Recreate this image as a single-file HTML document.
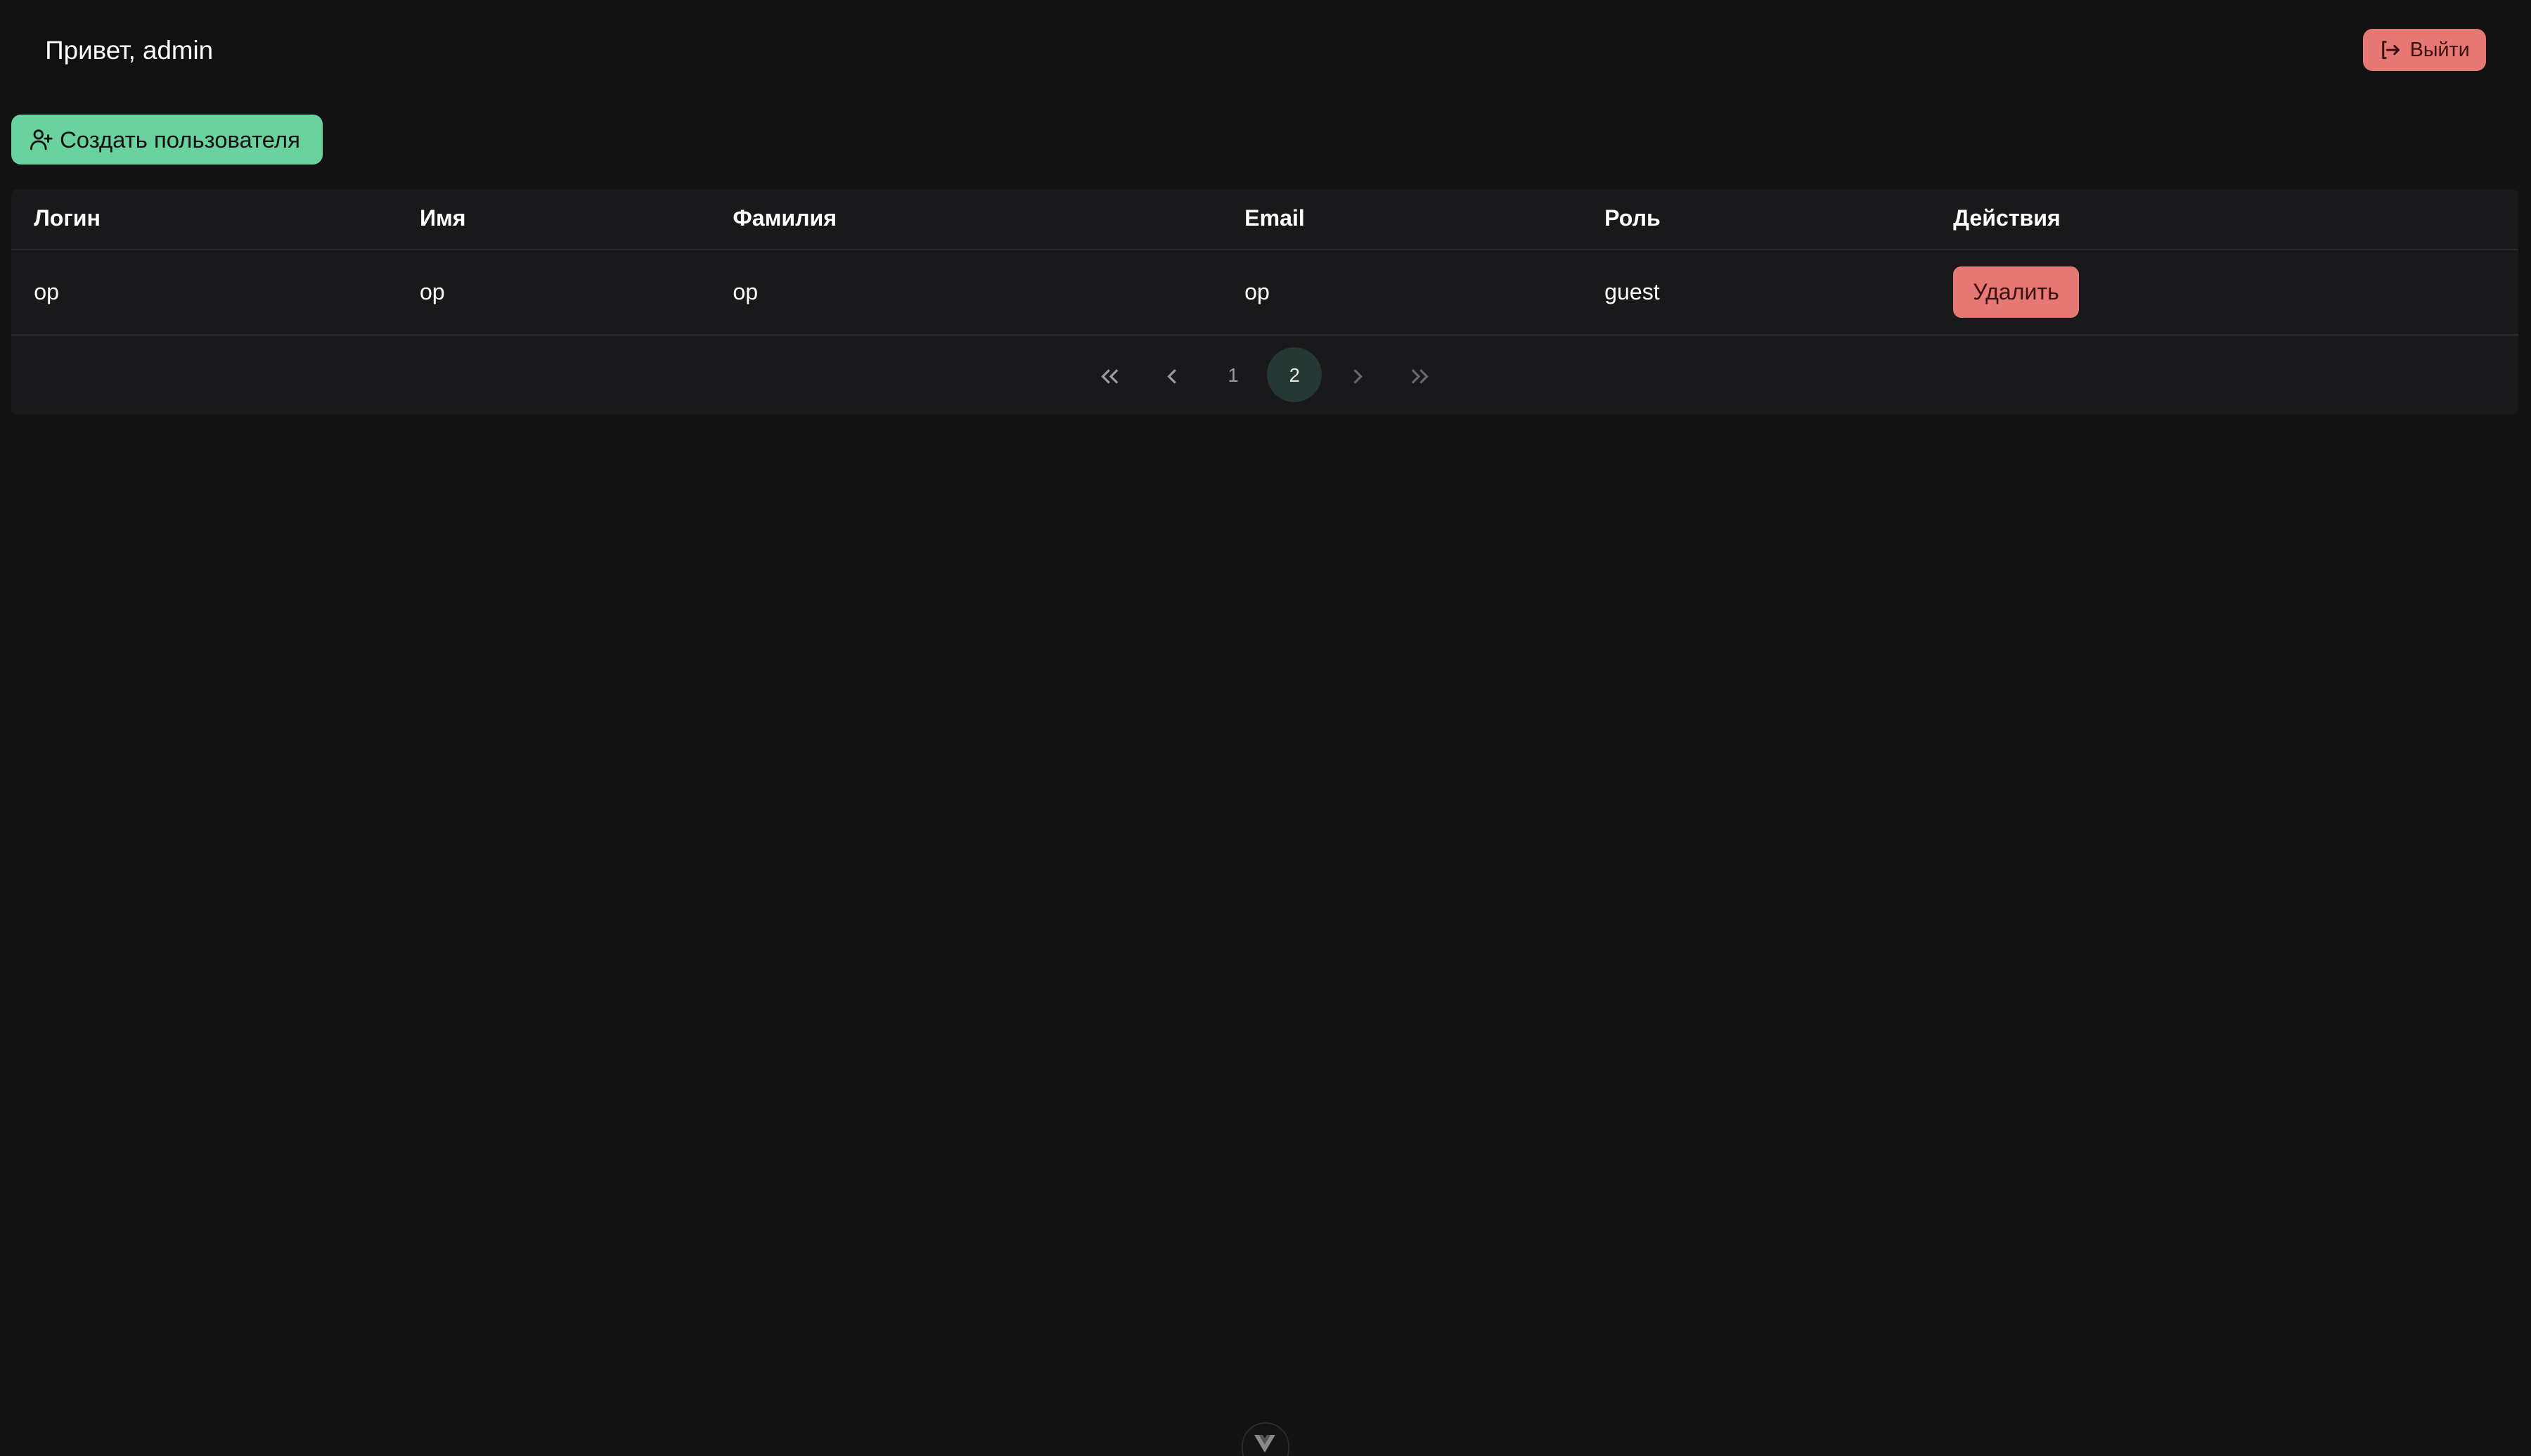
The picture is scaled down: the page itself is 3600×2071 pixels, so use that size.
<!DOCTYPE html>
<html><head><meta charset="utf-8"><style>
html,body{margin:0;padding:0;background:#121212;}
body{width:3600px;height:2070px;overflow:hidden;}
#w{zoom:2.29592;width:1568px;height:902px;overflow:hidden;position:relative;font-family:"Liberation Sans","Noto Sans CJK SC",sans-serif;color:#fff;}
.a{position:absolute;}
.hdr{left:0;top:0;width:1568px;height:57px;background:#111111;}
.btn{border-radius:6px;display:flex;align-items:center;justify-content:center;}
.th{font-weight:bold;font-size:14px;top:127px;}
.td{font-size:14px;top:173px;}
.pg{top:215px;width:34px;height:34px;line-height:35px;text-align:center;font-size:12px;color:#9a9a9f;}
.pg svg{vertical-align:middle;}
</style></head><body><div id="w">
<div class="a hdr"></div>
<div class="a" style="left:28px;top:22px;font-size:16px;">Привет, admin</div>
<div class="a btn" style="left:1464px;top:18px;width:76px;height:26px;background:#e77975;color:#3d1010;font-size:12.5px;">
<svg width="14" height="14" viewBox="0 0 14 14" style="margin-right:5px" fill="none" stroke="#3d1010" stroke-width="1.3" stroke-linecap="round" stroke-linejoin="round"><path d="M4 2H2.5v10H4M5 7h7M9.5 4.5L12 7 9.5 9.5"/></svg>Выйти</div>
<div class="a btn" style="left:7px;top:71px;width:193px;height:31px;background:#6ad29f;color:#111;font-size:14.3px;">
<svg width="15" height="15" viewBox="0 0 15 15" style="margin-right:4px;margin-left:-3px" fill="none" stroke="#111" stroke-width="1.2" stroke-linecap="round"><circle cx="6" cy="4.5" r="2.5"/><path d="M1.5 13.5c0-3 2-4.8 4.5-4.8S10.5 10.5 10.5 13.5M12 5v4M10 7h4"/></svg>Создать пользователя</div>
<div class="a" style="left:7px;top:117px;width:1553px;height:140px;background:#19191b;border-radius:4px;"></div>
<div class="a" style="left:7px;top:154px;width:1553px;height:1px;background:#2a2a2d;"></div>
<div class="a" style="left:7px;top:207px;width:1553px;height:1px;background:#2a2a2d;"></div>
<div class="a th" style="left:21px">Логин</div><div class="a th" style="left:260px">Имя</div><div class="a th" style="left:454px">Фамилия</div><div class="a th" style="left:771px">Email</div><div class="a th" style="left:994px">Роль</div><div class="a th" style="left:1210px">Действия</div>
<div class="a td" style="left:21px">op</div><div class="a td" style="left:260px">op</div><div class="a td" style="left:454px">op</div><div class="a td" style="left:771px">op</div><div class="a td" style="left:994px">guest</div>
<div class="a btn" style="left:1210px;top:165px;width:78px;height:32px;background:#e77975;color:#3d1010;font-size:14px;border-radius:5px;">Удалить</div>
<div class="a pg" style="left:671px"><svg width="14" height="10" viewBox="0 0 14 10" fill="none" stroke="#9a9a9f" stroke-width="1.4"><path d="M6 1L2 5l4 4M11 1L7 5l4 4"/></svg></div>
<div class="a pg" style="left:709px"><svg width="8" height="10" viewBox="0 0 8 10" fill="none" stroke="#9a9a9f" stroke-width="1.4"><path d="M6 1L2 5l4 4"/></svg></div>
<div class="a pg" style="left:747px">1</div>
<div class="a pg" style="left:785px;background:#253833;border-radius:50%;color:#e8e8e8">2</div>
<div class="a pg" style="left:824px"><svg width="8" height="10" viewBox="0 0 8 10" fill="none" stroke="#66666b" stroke-width="1.4"><path d="M2 1l4 4-4 4"/></svg></div>
<div class="a pg" style="left:862px"><svg width="14" height="10" viewBox="0 0 14 10" fill="none" stroke="#66666b" stroke-width="1.4"><path d="M3 1l4 4-4 4M8 1l4 4-4 4"/></svg></div>
<div class="a" style="left:769px;top:881px;width:28px;height:30px;border:1px solid #2a2a2a;border-radius:15px;background:#141414;"></div>
<svg class="a" style="left:777px;top:889px" width="13" height="11" viewBox="0 0 13 11"><path d="M0 0h3l3.5 6L10 0h3L6.5 11z" fill="#8a8a8a"/><path d="M3 0h2.2l1.3 2.2L7.8 0H10L6.5 6z" fill="#555"/></svg>
</div></body></html>
